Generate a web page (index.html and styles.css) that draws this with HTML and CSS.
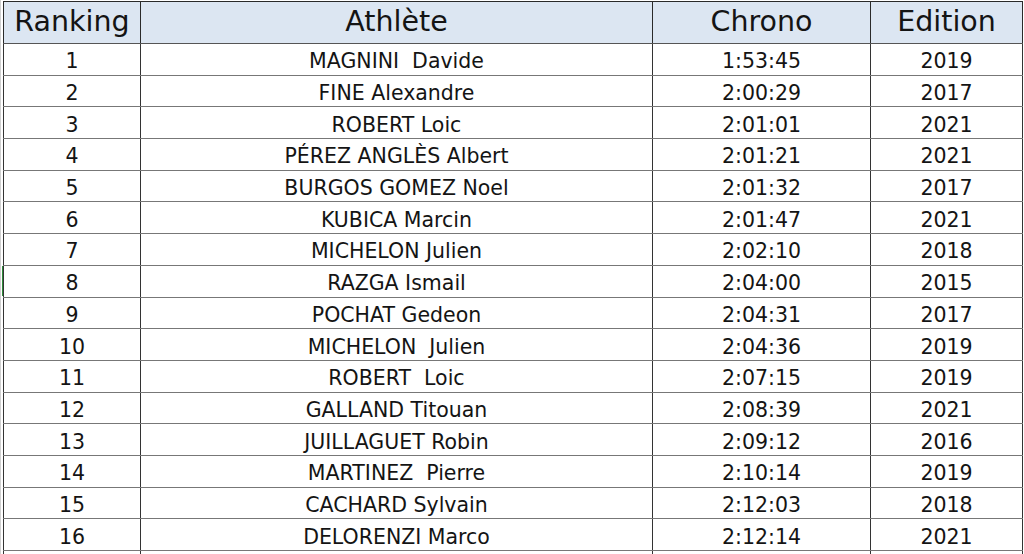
FILE: index.html
```html
<!DOCTYPE html>
<html lang="fr">
<head>
<meta charset="utf-8">
<title>Ranking</title>
<link rel="stylesheet" href="styles.css">
</head>
<body>
<div class="sheet">
  <table class="ranking">
    <colgroup>
      <col class="c-rank">
      <col class="c-name">
      <col class="c-time">
      <col class="c-year">
    </colgroup>
    <thead>
      <tr><th>Ranking</th><th>Athlète</th><th>Chrono</th><th>Edition</th></tr>
    </thead>
    <tbody>
      <tr><td>1</td><td>MAGNINI  Davide</td><td>1:53:45</td><td>2019</td></tr>
      <tr><td>2</td><td>FINE Alexandre</td><td>2:00:29</td><td>2017</td></tr>
      <tr><td>3</td><td>ROBERT Loic</td><td>2:01:01</td><td>2021</td></tr>
      <tr><td>4</td><td>PÉREZ ANGLÈS Albert</td><td>2:01:21</td><td>2021</td></tr>
      <tr><td>5</td><td>BURGOS GOMEZ Noel</td><td>2:01:32</td><td>2017</td></tr>
      <tr><td>6</td><td>KUBICA Marcin</td><td>2:01:47</td><td>2021</td></tr>
      <tr><td>7</td><td>MICHELON Julien</td><td>2:02:10</td><td>2018</td></tr>
      <tr class="active"><td>8</td><td>RAZGA Ismail</td><td>2:04:00</td><td>2015</td></tr>
      <tr><td>9</td><td>POCHAT Gedeon</td><td>2:04:31</td><td>2017</td></tr>
      <tr><td>10</td><td>MICHELON  Julien</td><td>2:04:36</td><td>2019</td></tr>
      <tr><td>11</td><td>ROBERT  Loic</td><td>2:07:15</td><td>2019</td></tr>
      <tr><td>12</td><td>GALLAND Titouan</td><td>2:08:39</td><td>2021</td></tr>
      <tr><td>13</td><td>JUILLAGUET Robin</td><td>2:09:12</td><td>2016</td></tr>
      <tr><td>14</td><td>MARTINEZ  Pierre</td><td>2:10:14</td><td>2019</td></tr>
      <tr><td>15</td><td>CACHARD Sylvain</td><td>2:12:03</td><td>2018</td></tr>
      <tr><td>16</td><td>DELORENZI Marco</td><td>2:12:14</td><td>2021</td></tr>
      <tr class="empty"><td></td><td></td><td></td><td></td></tr>
    </tbody>
  </table>
</div>
</body>
</html>
```

FILE: styles.css
```css
html, body {
  margin: 0;
  padding: 0;
  background: #ffffff;
}

.sheet {
  padding: 1px 0 0 2px;
  border-left: 1px solid #d0d0d0;
  height: 554px;
  overflow: hidden;
  box-sizing: border-box;
}

.ranking {
  border-collapse: collapse;
  table-layout: fixed;
  width: 1019px;
  font-family: "DejaVu Sans", sans-serif;
  color: #141414;
}

.c-rank { width: 137px; }
.c-name { width: 512px; }
.c-time { width: 218px; }
.c-year { width: 152px; }

.ranking th {
  height: 40px;
  padding: 0 0 1px;
  background: #dce6f2;
  font-weight: normal;
  font-size: 28.5px;
  line-height: 40px;
  text-align: center;
  border: 1px solid #2a2a2a;
  border-bottom-color: #555555;
}

.ranking td {
  height: 26.69px;
  padding: 4px 0 0;
  font-size: 20.5px;
  line-height: 26px;
  text-align: center;
  white-space: pre;
  border-left: 1px solid #333333;
  border-right: 1px solid #333333;
  border-bottom: 1px solid #777777;
}

.ranking tr.active td:first-child {
  box-shadow: -3px 0 0 -1px #2e8b3a;
}
```
